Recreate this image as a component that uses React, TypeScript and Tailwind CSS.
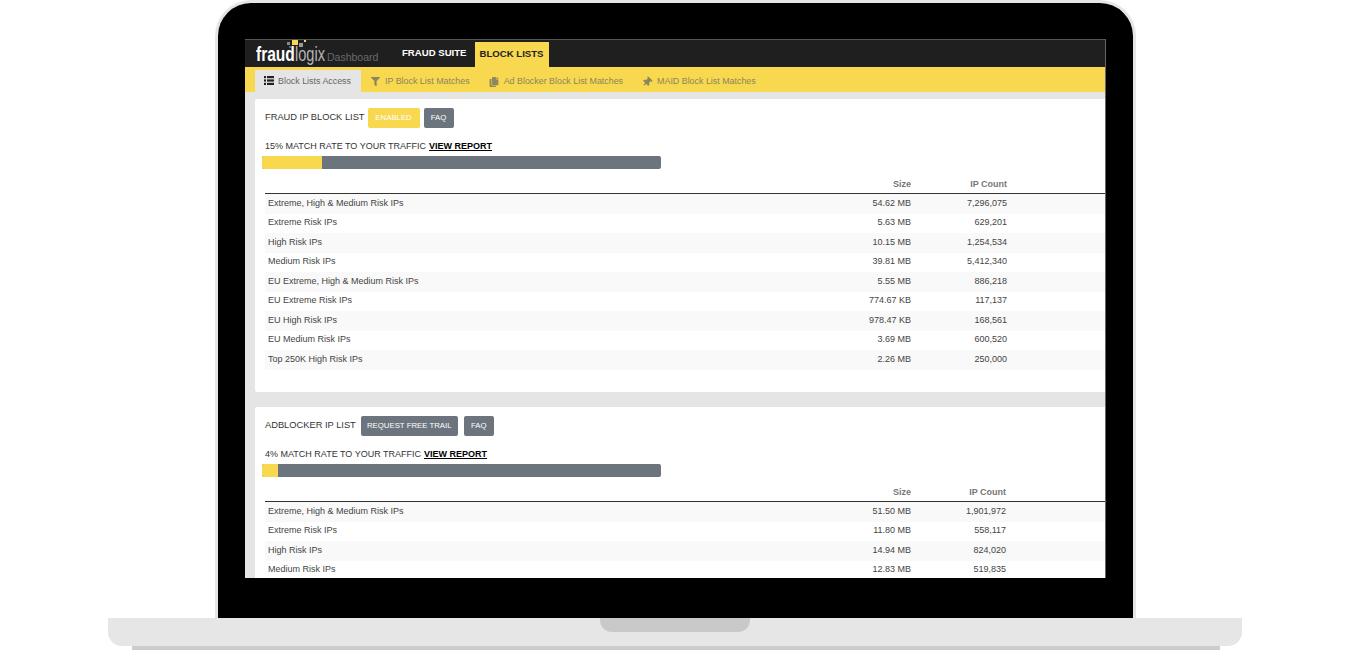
import { FaCopy, FaFilter, FaThumbtack } from "react-icons/fa";

const FRAUD_ROWS: [string, string, string][] = [
  ["Extreme, High & Medium Risk IPs", "54.62 MB", "7,296,075"],
  ["Extreme Risk IPs", "5.63 MB", "629,201"],
  ["High Risk IPs", "10.15 MB", "1,254,534"],
  ["Medium Risk IPs", "39.81 MB", "5,412,340"],
  ["EU Extreme, High & Medium Risk IPs", "5.55 MB", "886,218"],
  ["EU Extreme Risk IPs", "774.67 KB", "117,137"],
  ["EU High Risk IPs", "978.47 KB", "168,561"],
  ["EU Medium Risk IPs", "3.69 MB", "600,520"],
  ["Top 250K High Risk IPs", "2.26 MB", "250,000"],
];

const ADBLOCK_ROWS: [string, string, string][] = [
  ["Extreme, High & Medium Risk IPs", "51.50 MB", "1,901,972"],
  ["Extreme Risk IPs", "11.80 MB", "558,117"],
  ["High Risk IPs", "14.94 MB", "824,020"],
  ["Medium Risk IPs", "12.83 MB", "519,835"],
];

export default function App() {
  return (
    <div className="h-[650px] w-[1350px] overflow-hidden bg-white font-['Liberation_Sans',Arial,sans-serif]">
      <div className="ml-[215px] h-[618px] w-[921px] rounded-t-[36px] border-[3px] border-b-0 border-[#e6e6e6] bg-black px-[27px] pt-[36px]">
        <Screen />
      </div>
      <div className="ml-[108px] flex h-[28px] w-[1134px] justify-center rounded-b-[14px] bg-[#e6e6e6]">
        <div className="h-[14px] w-[150px] rounded-b-[12px] bg-[#c9c9c9]" />
      </div>
      <div className="ml-[132px] h-[4px] w-[1088px] bg-[#cccccc]" />
    </div>
  );
}

function Screen() {
  return (
    <div className="h-[539px] w-[861px] overflow-hidden border-r border-[#666] bg-[#e5e5e5]">
      <div className="flex h-[28px] border-t border-[#555] bg-[#1f1f1f]">
        <Logo />
        <div className="ml-[24px] flex h-[24px] items-center self-center text-[9.6px] font-bold text-white">
          FRAUD SUITE
        </div>
        <div className="ml-[8px] mt-[2px] flex w-[74px] items-center justify-center bg-[#f7d84f] text-[9.6px] font-bold text-[#222]">
          BLOCK LISTS
        </div>
      </div>
      <div className="flex h-[25px] items-end bg-[#f7d84f] pl-[10px] text-[8.9px] text-[#8a8660]">
        <div className="flex h-[22px] w-[106px] items-center bg-[#e5e5e5] pl-[9px] pt-[1px] text-[#666]">
          <ListIcon />
          Block Lists Access
        </div>
        <SubTab icon={<FaFilter className="h-[9px] w-[9px]" />} className="ml-[10px]">IP Block List Matches</SubTab>
        <SubTab icon={<FaCopy className="h-[10px] w-[10px]" />} className="ml-[19px]">Ad Blocker Block List Matches</SubTab>
        <SubTab icon={<FaThumbtack className="h-[10px] w-[10px] rotate-45" />} className="ml-[19px]">MAID Block List Matches</SubTab>
      </div>

      <Card
        className="mt-[7px]"
        title="FRAUD IP BLOCK LIST"
        buttons={
          <>
            <button className="ml-[3px] h-[20px] w-[52px] rounded-[2px] bg-[#f7d84f] pb-[1px] text-[7.8px] text-white">ENABLED</button>
            <button className="ml-[4px] h-[20px] w-[30px] rounded-[2px] bg-[#6c757d] pb-[1px] text-[7.8px] text-white">FAQ</button>
          </>
        }
        rate={15}
        fill="w-[60px]"
        countWidth="w-[96px]"
        rows={FRAUD_ROWS}
      />
      <Card
        className="mt-[15px]"
        title="ADBLOCKER IP LIST"
        buttons={
          <>
            <button className="ml-[5px] h-[20px] w-[97px] rounded-[2px] bg-[#6c757d] pb-[1px] text-[7.8px] text-white">REQUEST FREE TRAIL</button>
            <button className="ml-[6px] h-[20px] w-[30px] rounded-[2px] bg-[#6c757d] pb-[1px] text-[7.8px] text-white">FAQ</button>
          </>
        }
        rate={4}
        fill="w-[16px]"
        countWidth="w-[95px]"
        rows={ADBLOCK_ROWS}
      />
    </div>
  );
}

function ListIcon() {
  return (
    <svg viewBox="0 0 10 9" className="mr-[4px] mb-[2px] h-[9px] w-[10px] text-[#222]" fill="currentColor">
      <rect x="0" y="0" width="2" height="2.2" />
      <rect x="3" y="0" width="7" height="2.2" />
      <rect x="0" y="3.4" width="2" height="2.2" />
      <rect x="3" y="3.4" width="7" height="2.2" />
      <rect x="0" y="6.8" width="2" height="2.2" />
      <rect x="3" y="6.8" width="7" height="2.2" />
    </svg>
  );
}

function Logo() {
  return (
    <div className="relative ml-[11px] flex h-full w-[122px] items-end pb-[3px] leading-none">
      <span className="absolute left-[36px] top-0 h-[5px] w-[6px] bg-[#f7d84f]" />
      <span className="absolute left-[31px] top-[2px] h-[3px] w-[3px] bg-[#888]" />
      <span className="absolute left-[43px] top-[3px] h-[4px] w-[4px] bg-[#999]" />
      <span className="absolute left-[33px] top-[6px] h-[2px] w-[2px] bg-[#666]" />
      <span className="absolute left-[48px] top-0 h-[2px] w-[2px] bg-[#f7d84f]" />
      <span className="w-[39px] origin-left scale-x-[0.74] text-[21px] font-bold text-white">fraud</span>
      <span className="w-[30px] origin-left scale-x-[0.73] text-[20px] text-[#b5b5b5]">logix</span>
      <span className="mb-[2px] ml-[2px] text-[10.5px] text-[#6a6a6a]">Dashboard</span>
    </div>
  );
}

function SubTab({ icon, className, children }: { icon: React.ReactNode; className?: string; children: React.ReactNode }) {
  return (
    <div className={`flex h-[22px] items-center gap-[5px] pt-[1px] ${className ?? ""}`}>
      {icon}
      {children}
    </div>
  );
}

function Card({
  className,
  title,
  buttons,
  rate,
  fill,
  countWidth,
  rows,
}: {
  className?: string;
  title: string;
  buttons: React.ReactNode;
  rate: number;
  fill: string;
  countWidth: string;
  rows: [string, string, string][];
}) {
  return (
    <div className={`ml-[10px] h-[293px] w-[880px] rounded-[2px] bg-white pl-[10px] pt-[9px] ${className ?? ""}`}>
      <div className="flex h-[20px] items-center text-[9.3px] text-[#333]">
        <span className="pb-[1px]">{title}</span>
        {buttons}
      </div>
      <div className="mt-[11px] flex h-[14px] items-center gap-[3px] pt-[1px] text-[9px] text-[#333]">
        {rate}% MATCH RATE TO YOUR TRAFFIC
        <span className="font-bold text-black underline">VIEW REPORT</span>
      </div>
      <div className="-ml-[3px] mt-[3px] h-[13px] w-[399px] overflow-hidden rounded-[2px] bg-[#6c757d]">
        <div className={`h-full bg-[#f7d84f] ${fill}`} />
      </div>
      <div className="mt-[6px] flex h-[19px] items-center border-b border-[#333] pt-[2px] text-[9px] font-bold text-[#777]">
        <div className="w-[646px] text-right">Size</div>
        <div className={`${countWidth} text-right`}>IP Count</div>
      </div>
      {rows.map(([name, size, count], i) => (
        <div
          key={name}
          className={`flex h-[19.5px] items-center pb-[1px] text-[9px] text-[#444] ${i % 2 === 0 ? "bg-[#f9f9f9]" : "bg-white"}`}
        >
          <div className="w-[496px] pl-[3px]">{name}</div>
          <div className="w-[150px] text-right">{size}</div>
          <div className={`${countWidth} text-right`}>{count}</div>
        </div>
      ))}
    </div>
  );
}
